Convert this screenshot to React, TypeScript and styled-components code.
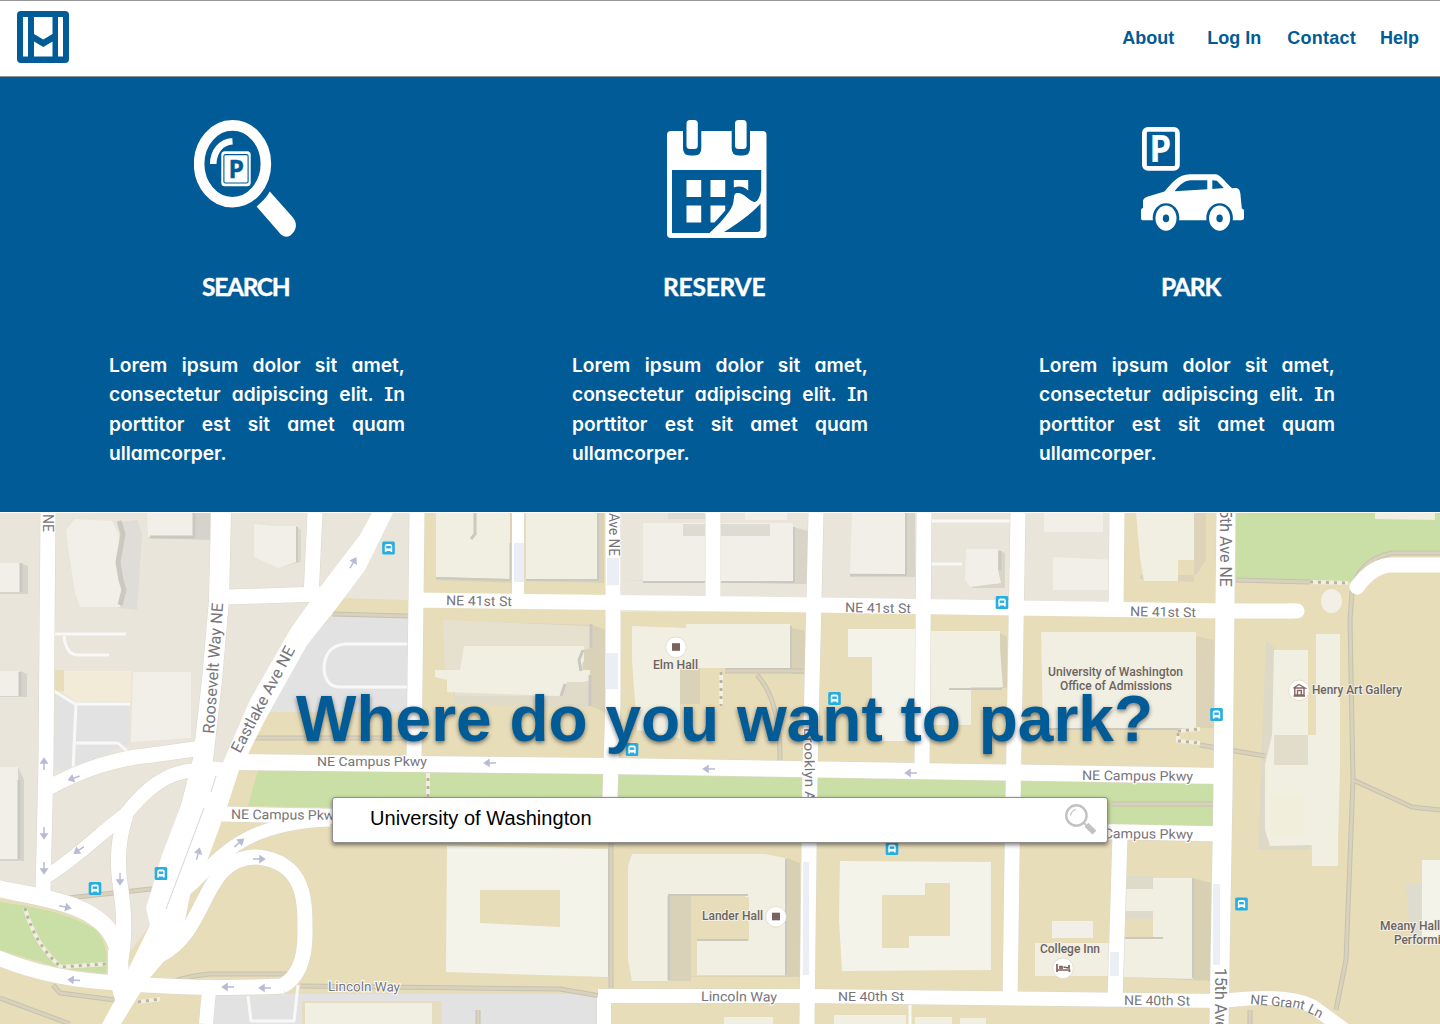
import React from "react";
import styled, { createGlobalStyle } from "styled-components";

const BLUE = "#015b96";

const GlobalStyle = createGlobalStyle`
  * { box-sizing: border-box; }
  body { margin: 0; background: #fff; font-family: "Helvetica Neue", "Liberation Sans", Arial, sans-serif; }
`;

const Page = styled.div`
  width: 1440px;
  height: 1024px;
  display: flex;
  flex-direction: column;
  overflow: hidden;
`;

const Header = styled.header`
  height: 77px;
  display: flex;
  justify-content: space-between;
  align-items: flex-start;
  padding: 10px 21px 0 17px;
  border-top: 1px solid #979797;
  border-bottom: 1px solid #8a8f93;
  background: #fff;
`;

const Nav = styled.nav`
  display: flex;
  padding-top: 16px;
`;

const NavLink = styled.a<{ $gap: number; $track: number }>`
  margin-left: ${(p) => p.$gap}px;
  color: ${BLUE};
  font-size: 18px;
  font-weight: 700;
  line-height: 22px;
  letter-spacing: ${(p) => p.$track}px;
  white-space: nowrap;
`;

const Features = styled.section`
  height: 436px;
  display: grid;
  grid-template-columns: 296px 296px 296px;
  column-gap: 167px;
  padding: 43px 0 0 109px;
  background: ${BLUE};
  border-bottom: 1px solid #fff;
`;

const Feature = styled.article<{ $shift?: number }>`
  margin-left: ${(p) => p.$shift ?? 0}px;
  width: 296px;
  display: flex;
  flex-direction: column;
`;

const IconSlot = styled.div<{ $left: number }>`
  height: 118px;
  margin-left: ${(p) => p.$left}px;
  svg { display: block; }
`;

const FeatureTitle = styled.h2<{ $left: number; $track: number }>`
  margin: 34px 0 0 ${(p) => p.$left}px;
  color: #fff;
  font-family: Chalkboard, Lato, "Noto Sans", sans-serif;
  font-size: 24.5px;
  font-weight: 700;
  line-height: 30px;
  letter-spacing: ${(p) => p.$track}px;
  white-space: nowrap;
  -webkit-text-stroke: 0.4px #fff;
`;

const FeatureText = styled.p`
  margin: 49px 0 0;
  color: #fff;
  font-family: Chalkboard, Inter, "Noto Sans", sans-serif;
  font-feature-settings: "cv11", "cv08";
  font-size: 19.2px;
  font-weight: 600;
  line-height: 29.3px;
  letter-spacing: 0;
  text-align: justify;
`;

const Hero = styled.section`
  height: 511px;
  display: grid;
  grid-template: 511px / 1440px;
`;

const MapSvg = styled.svg`
  grid-area: 1 / 1;
  display: block;
  font-family: Roboto, sans-serif;
`;

const HeroContent = styled.div`
  grid-area: 1 / 1;
  z-index: 1;
  display: flex;
  flex-direction: column;
  align-items: center;
  padding-top: 168px;
`;

const HeroTitle = styled.h1`
  margin: 0;
  padding-left: 9px;
  color: ${BLUE};
  font-size: 64px;
  font-weight: 700;
  line-height: 76px;
  white-space: nowrap;
  text-shadow: 0 2px 4px rgba(0, 0, 0, 0.5);
`;

const SearchBox = styled.div`
  width: 776px;
  height: 46px;
  margin-top: 40px;
  padding: 0 10px 2px 37px;
  display: flex;
  align-items: center;
  justify-content: space-between;
  background: #fff;
  border: 1px solid #8f8f8f;
  border-radius: 3px;
  box-shadow: 0 2px 4px rgba(0, 0, 0, 0.5);
`;

const SearchText = styled.span`
  padding-bottom: 2px;
  color: #000;
  font-size: 20px;
  line-height: 24px;
  letter-spacing: 0.05px;
`;

function Logo() {
  return (
    <svg width="52" height="52" viewBox="17 11 52 52">
      <rect x="17" y="11" width="52" height="52" rx="4" fill={BLUE} />
      <g fill="#fff">
        <rect x="23" y="17" width="5" height="39.5" />
        <rect x="58" y="17" width="5" height="39.5" />
        <path d="M34 17H52.5V34L43.3 39.5L34 34Z" />
        <path d="M34 41.5L43.3 47L52.5 41.5V56.5H34Z" />
      </g>
    </svg>
  );
}

function SearchIcon() {
  return (
    <svg width="103" height="118" viewBox="194 120 103 118">
      <ellipse cx="232.5" cy="163.8" rx="33.4" ry="38.4" fill="none" stroke="#fff" strokeWidth="10.6" />
      <path d="M213.2 164C213.5 151 221 142 232.5 141.2" fill="none" stroke="#fff" strokeWidth="6.6" />
      <path d="M256.6 206.5C262 202 266 198 269.8 191.6L292.5 217C296.5 221.5 297 227 294 231.5C290 237.5 285 238.5 280.5 234Z" fill="#fff" />
      <rect x="221.3" y="151.3" width="29.4" height="35" rx="3.5" fill="#fff" />
      <rect x="223.9" y="154.6" width="24.2" height="28.4" rx="1.5" fill="none" stroke={BLUE} strokeWidth="1.1" />
      <text x="228.4" y="178.3" fontSize="25" fontWeight="700" fontFamily="Open Sans, Noto Sans, sans-serif" fill={BLUE} stroke={BLUE} strokeWidth="0.4" textLength="15.5" lengthAdjust="spacingAndGlyphs">P</text>
    </svg>
  );
}

function CalendarIcon() {
  return (
    <svg width="100" height="118" viewBox="667 120 100 118">
      <rect x="667" y="131" width="99.5" height="107" rx="4" fill="#fff" />
      <path d="M683 130H701.3V148Q701.3 155.5 694.5 155.5H690Q683 155.5 683 148Z" fill={BLUE} />
      <path d="M731.7 130H750V148Q750 155.5 743 155.5H738.5Q731.7 155.5 731.7 148Z" fill={BLUE} />
      <rect x="686.5" y="120" width="11.3" height="29" rx="3.5" fill="#fff" />
      <rect x="735" y="120" width="11.6" height="29" rx="3.5" fill="#fff" />
      <path d="M672 170H761.2V190C760 197 757.5 202.5 754 202C748 200 744 193 738 193C731 193 737 201 729.5 211C724 219 717 226 709.5 233H672Z" fill={BLUE} />
      <path d="M760.6 203.5V228Q760.6 232 757 232H724C737 224 750 215 760.6 203.5Z" fill={BLUE} />
      <g fill="#fff">
        <rect x="686.5" y="180" width="14.7" height="17" />
        <rect x="710.5" y="180" width="14.7" height="17" />
        <rect x="686.5" y="205.5" width="14.7" height="17" />
        <path d="M710.5 205.5H725.2V210.5L714.5 222.5H710.5Z" />
        <path d="M733.8 180H748.2V190.5C744 186 739 185.8 733.8 187.5Z" />
      </g>
    </svg>
  );
}

function ParkIcon() {
  return (
    <svg width="104" height="118" viewBox="1141 120 104 118">
      <rect x="1144.4" y="129.4" width="33" height="39" rx="3.5" fill="none" stroke="#fff" strokeWidth="4.8" />
      <text x="1149.3" y="162.3" fontSize="36.8" fontWeight="700" fontFamily="Open Sans, Noto Sans, sans-serif" fill="#fff" textLength="22" lengthAdjust="spacingAndGlyphs">P</text>
      <path fillRule="evenodd" fill="#fff" d="M1142.5 220.3Q1141 220.3 1141 218.5V210Q1141 208.5 1143 208V200.5Q1144 197.5 1148 196.5L1164.5 191.5C1172 183 1178 174.3 1190 174.3H1215.5C1220 174.3 1224 181 1232 188.3C1238 187.2 1239.5 189 1240.3 193L1241.8 208.5Q1244 209 1244 210.5V218Q1244 220.3 1241.5 220.3ZM1174.6 191.2L1207.3 189.2V180.2H1191C1185 180.2 1179 185 1174.6 191.2ZM1212.3 180.2V189L1223.8 188L1216.8 180.8Z" />
      {[1166, 1219.6].map((x) => (
        <g key={x}>
          <ellipse cx={x} cy="218" rx="13.3" ry="14.8" fill={BLUE} />
          <ellipse cx={x} cy="218.2" rx="10.5" ry="12.6" fill="#fff" />
          <ellipse cx={x} cy="218.4" rx="3.2" ry="3.8" fill={BLUE} />
        </g>
      ))}
    </svg>
  );
}

function Magnifier() {
  return (
    <svg width="32" height="32" viewBox="1065 803 32 32">
      <circle cx="1076.4" cy="815.5" r="10.2" fill="none" stroke="#c2c2c2" strokeWidth="2.4" />
      <path d="M1070.5 815.5Q1071.5 810.5 1076 809.5" fill="none" stroke="#c2c2c2" strokeWidth="1.2" />
      <path d="M1083.5 822.5L1086 825" stroke="#c2c2c2" strokeWidth="2" />
      <path d="M1086.4 824.8L1094.4 832.6" stroke="#c2c2c2" strokeWidth="5.4" />
    </svg>
  );
}

type Shape = [string, string];

const LAND = "#e8ddb9";
const HOME = "#e9e5db";
const LOT = "#e2e2e2";
const PARK = "#cadfa6";
const BLD = "#f1eee2";
const PALE = "#f4f3ea";
const PINK = "#f2efe8";
const SHADE = "#d9d2b8";
const GREY = "#d5d3cc";

const areas: Shape[] = [
  [HOME, "M0 513H414V617H324L240 760L150 925L124 960L115 925L60 900L0 882Z"],
  [HOME, "M613 513H1118V612H613Z"],
  [LAND, "M340 598L410 600V613L333 612Z"],
  [LOT, "M332 616L409 617V712H262L280 672L310 640Z"],
  [LOT, "M55 692L75 704H130L130 743L75 770H54Z"],
  [LAND, "M55 670H64V691H55Z"],
  ["#f1ebd8", "M64 671H131V701L76 702L64 693Z"],
  [PARK, "M1236 513H1440V556H1392Q1370 558 1352 582L1236 579Z"],
  [PARK, "M258 769L1214 784V826L248 806Z"],
  [PARK, "M0 902L26 906Q72 914 96 930Q110 945 106 974L60 968L0 950Z"],
  [LOT, "M214 994H598V1024H214Z"],
  [LAND, "M438 960H598V990L438 984Z"],
  ["#e6ddc0", "M302 1001H442V1024H302Z"],
];

const shadows: Shape[] = [
  ["#deddd7", "M120 522L137 520L142 534L137 610L118 608Z"],
  [GREY, "M195 513H210V540L148 538Z"],
  [GREY, "M21 564L28 566V594H0V591H21Z"],
  ["#dbd7cc", "M296 526L301 530V562L280 567L270 563Z"],
  [GREY, "M20 671L27 674V697H0V695H20Z"],
  [GREY, "M18 767L24 780V861H0V858H18Z"],
  [SHADE, "M510 513H515V583L436 580V577Z"],
  [SHADE, "M597 513H604V583L526 581V578Z"],
  ["#d8d4c8", "M793 527L808 531V584H792L622 580H792Z"],
  ["#d8d4c8", "M906 513H915V577H850V574H906Z"],
  ["#d8d4c8", "M998 550L1005 553V588H972V584H998Z"],
  [SHADE, "M446 621L593 625L605 630V712L590 706L455 700Z"],
  ["#d9d1b6", "M792 628L806 631V674H792Z"],
  ["#d9d1b6", "M1000 633L1007 637V688H1001Z"],
  ["#ddd3b8", "M1196 636L1214 640V728H1196Z"],
  ["#ddd3b8", "M1194 513H1206V560L1196 575H1140V579L1194 582Z"],
  ["#d8d0b2", "M787 858L800 863V977H771L632 976H785Z"],
  ["#d8d0b2", "M1193 878L1211 883V981L1122 977H1193Z"],
  ["#ded8c6", "M1266 640L1275 648V760L1268 840H1310V850H1258Z"],
  ["#dedccf", "M1406 884H1423V935L1410 940Z"],
];

const buildings: Shape[] = [
  [PINK, "M75 519L112 521L118 533L120 546L116 562L122 588L120 607H80L75 592L70 560L66 530Z"],
  [PINK, "M147 513H193V537H148Z"],
  [PINK, "M254 524L273 526H296V562L278 568L254 557Z"],
  [PINK, "M0 563H20V592H0Z"],
  [PINK, "M0 671H19V696H0Z"],
  [PINK, "M133 672H191V738L131 742Z"],
  [PINK, "M0 767H18V859H0Z"],
  [BLD, "M436 513H510V579L436 577Z"],
  [BLD, "M526 513H597V580H526Z"],
  ["#e6e0cf", "M443 620L591 626V648L583 650V703L455 700V690L445 670Z"],
  [BLD, "M464 646H584V661L578 670H590V681L565 684L561 696L447 692V680L435 677V670H460Z"],
  ["#e0dbc9", "M567 682H590V707L454 704V696H560Z"],
  [PINK, "M643 523H793V581H643Z"],
  ["#dedbd2", "M668 513H706V519H668ZM683 524H770V536H683Z"],
  [BLD, "M632 626L686 628V624H790V668H680V738L637 730L632 660Z"],
  [SHADE, "M680 668H700V704H680Z"],
  [PINK, "M745 513H787V520H745Z"],
  [PINK, "M852 513H905V574L850 573Z"],
  [PINK, "M966 549H998V570L1001 583L970 587L965 580Z"],
  [PINK, "M1044 513H1103V532H1044ZM1053 557L1118 560V590H1053Z"],
  [PALE, "M848 629H916V741H872V657H848Z"],
  [BLD, "M930 631H1000V650L1003 687H971V725H930Z"],
  [BLD, "M1041 632H1196V729H1043Z"],
  [BLD, "M1136 513H1194V560H1178V581H1144L1140 558Z"],
  [BLD, "M1375 513H1435V520L1375 519Z"],
  [BLD, "M1274 650H1308V735H1272Z"],
  [BLD, "M1316 634H1340V770L1338 840V866H1312V845L1270 846L1265 830V765L1272 735H1316Z"],
  ["#e2dccb", "M1274 735H1308V765H1274Z"],
  ["#f2eedc", "M1270 794H1305V838H1270Z"],
  [PALE, "M447 846L608 849V977L446 972Z"],
  [BLD, "M632 854H765L785 858L787 975H697V940H745V895H668V981H632L628 960V866Z"],
  [SHADE, "M668 895H691V981H668Z"],
  [PALE, "M840 861L991 862V970L842 971L839 920Z"],
  [PINK, "M1052 921H1093V938H1052Z"],
  [BLD, "M1035 943H1122V976H1035Z"],
  [BLD, "M1122 878H1193V979L1122 977Z"],
  ["#dfdbca", "M1122 876H1153V889H1122ZM1122 911H1153V919H1122Z"],
  [PALE, "M1422 860H1440V940H1422Z"],
  [BLD, "M305 1003H432V1024H305Z"],
  [BLD, "M724 1017H773V1024H724ZM834 1015H906V1024H834ZM915 1017H952V1024H915ZM960 1018H986V1024H960Z"],
];

const courts: Shape[] = [
  [LAND, "M480 890H560V927L480 923Z"],
  [LAND, "M691 897H749V940H691Z"],
  [LAND, "M882 895H925V883H950V936H909V948H882Z"],
  [LAND, "M1125 919H1153V939H1125Z"],
];

const edges: [number, string][] = [
  [5, "M119 521L123 534L118 562L121 580L124 590L120 605"],
  [3, "M194 513V537L150 537"],
  [3, "M21 563V592M20 672V696M19 780V859"],
  [2, "M297 527V562"],
  [3, "M475 513V534L471 539"],
  [3, "M511 543V580"],
  [2, "M598 513V580H526"],
  [2, "M436 578L510 580"],
  [2, "M794 527V582H643"],
  [2, "M906 513V575H850"],
  [3, "M1000 551V570"],
  [3, "M591 624V648M583 650L579 660L581 671M590 675V706M565 684L561 696"],
  [2, "M791 626V669H726"],
  [3, "M669 896V980"],
  [2, "M786 859V975M668 895H748M697 940H748"],
  [2, "M609 849V975"],
  [2, "M1122 938H1163M1193 878V978"],
  [2, "M1043 729H1196"],
  [2, "M949 689H1002"],
];

const roads: [number, string][] = [
  [15, "M48 513L46 760L43 892"],
  [20, "M221 513L219 600L212 680L203 760L190 810"],
  [15, "M228 597L320 594"],
  [15, "M315 513L311 598"],
  [15, "M417 513L414 762"],
  [12, "M518 513V598"],
  [15, "M613 513V700L610 798"],
  [15, "M713 513V602"],
  [15, "M816 513L810 770L807 1024"],
  [15, "M924 513L922 768"],
  [15, "M1018 513L1012 860L1010 1005"],
  [15, "M1117 513L1116 608"],
  [15, "M1120 836L1115 1000"],
  [19, "M1226 513L1223 790L1219 1024"],
  [16, "M238 762L610 766L1223 776"],
  [15, "M222 814L1223 834"],
  [15, "M48 788Q98 760 152 755L202 748"],
  [14, "M45 877C75 860 100 833 125 815C145 790 165 772 196 770"],
  [15, "M126 815Q114 850 121 890Q127 930 120 965"],
  [17, "M-4 888C40 898 92 902 112 935Q124 955 118 990"],
  [15, "M-4 957Q50 980 120 983Q200 990 284 986"],
  [15, "M160 955C210 930 200 857 257 857C305 862 305 900 305 930Q306 974 282 986"],
  [13, "M178 896L192 884C222 855 245 823 330 820"],
  [14, "M209 990L206 1024"],
  [14, "M598 996H808L1222 1001Q1285 993 1312 1006L1345 1030"],
  [14, "M604 997V1024"],
];

const lanes = [
  "M55 634H126", "M64 636Q66 655 78 655H109", "M54 691L75 704H130", "M76 704L73 770", "M76 743H118L128 752",
  "M409 644H345Q324 646 324 670Q326 687 340 687H409", "M931 521H1011", "M931 564H962", "M248 996L251 1021H294L298 985",
  "M910 1005V1024",
];

const paths = [
  "M1236 580L1310 582", "M1440 553H1392Q1358 560 1352 592L1350 620L1353 780Q1350 860 1346 960L1336 1010",
  "M1353 780L1412 807L1440 810", "M1200 745L1265 756", "M1112 804H1214", "M300 986L560 989L600 996", "M611 843V988",
  "M725 671H806", "M757 675Q781 700 780 765", "M245 738L410 738", "M332 614L409 616",
  "M53 985L60 993L115 1000M0 998L70 1024", "M155 990Q180 976 210 974H296", "M68 898L160 888", "M478 1024V1010",
  "M1250 1010V1024",
];

const dots = ["M721 672V706", "M428 770V797", "M1310 582L1348 583", "M1178 731L1200 729M1178 733V741L1200 743", "M25 908Q35 945 61 967L106 964", "M138 1002L160 999"];

const buses: [number, number][] = [
  [388.5, 548], [1002, 602.5], [834.5, 698.5], [632, 749.5], [1216.5, 714.5], [161, 873.5], [95, 888.5], [892, 848.5], [1241.5, 904],
];

const arrows: [number, number, number][] = [
  [353, 563, -60], [44, 764, -90], [44, 833, 90], [44, 868, 90], [74, 778, 160], [79, 850, 145], [120, 879, 90], [65, 907, 12],
  [198, 854, -75], [239, 843, -40], [259, 859, 0], [74, 980, 185], [228, 987, 180], [265, 988, 180], [490, 763, 180],
  [709, 769, 180], [911, 773, 180],
];

interface Label { t: string; x: number; y: number; w: number; r?: number; s?: number; poi?: boolean }

const labels: Label[] = [
  { t: "NE", x: 43, y: 514, w: 18, r: 90, s: 15 },
  { t: "Roosevelt Way NE", x: 214, y: 734, w: 131, r: -86, s: 16 },
  { t: "Eastlake Ave NE", x: 240, y: 754, w: 118, r: -62, s: 16 },
  { t: "Ave NE", x: 609, y: 513, w: 43, r: 90, s: 14.5 },
  { t: "NE 41st St", x: 446, y: 605, w: 66, r: 1 },
  { t: "NE 41st St", x: 845, y: 612, w: 66, r: 1 },
  { t: "NE 41st St", x: 1130, y: 616, w: 66, r: 1 },
  { t: "5th Ave NE", x: 1220, y: 509, w: 78, r: 90, s: 16 },
  { t: "NE Campus Pkwy", x: 317, y: 766, w: 110 },
  { t: "NE Campus Pkwy", x: 1082, y: 780, w: 111, r: 0.5 },
  { t: "NE Campus Pkwy", x: 231, y: 819, w: 110, r: 0.5 },
  { t: "NE Campus Pkwy", x: 1082, y: 838, w: 111, r: 0.5 },
  { t: "Brooklyn Ave", x: 804, y: 728, w: 88, r: 89, s: 13.5 },
  { t: "Lincoln Way", x: 328, y: 991, w: 72, r: 0.5 },
  { t: "Lincoln Way", x: 701, y: 1001, w: 76, r: 0.5 },
  { t: "NE 40th St", x: 838, y: 1001, w: 66 },
  { t: "NE 40th St", x: 1124, y: 1005, w: 66, r: 0.5 },
  { t: "15th Ave NE", x: 1215, y: 968, w: 86, r: 90, s: 16 },
  { t: "Elm Hall", x: 653, y: 669, w: 45, s: 12, poi: true },
  { t: "University of Washington", x: 1048, y: 676, w: 135, s: 12, poi: true },
  { t: "Office of Admissions", x: 1060, y: 690, w: 112, s: 12, poi: true },
  { t: "Henry Art Gallery", x: 1312, y: 694, w: 90, s: 12, poi: true },
  { t: "Lander Hall", x: 702, y: 920, w: 61, s: 12, poi: true },
  { t: "College Inn", x: 1040, y: 953, w: 60, s: 12, poi: true },
  { t: "Meany Hall", x: 1380, y: 930, w: 60, s: 12, poi: true },
  { t: "Performing", x: 1394, y: 944, w: 60, s: 12, poi: true },
];

const Fills = ({ items }: { items: Shape[] }) => (
  <g>{items.map(([fill, d], i) => <path key={i} fill={fill} d={d} />)}</g>
);

function CityMap() {
  return (
    <MapSvg width="1440" height="511" viewBox="0 513 1440 511">
      <rect y="513" width="1440" height="511" fill={LAND} />
      <Fills items={areas} />
      <Fills items={shadows} />
      <Fills items={buildings} />
      <Fills items={courts} />
      <g fill="none" stroke="#cbc8c0" strokeLinejoin="round">
        {edges.map(([w, d]) => <path key={d} d={d} strokeWidth={w} />)}
      </g>
      <g fill="none" strokeLinejoin="round">
        {paths.map((d) => <path key={d} d={d} stroke="#c7c1b0" strokeWidth="5" />)}
        {paths.map((d) => <path key={d} d={d} stroke="#d8d1bb" strokeWidth="3" />)}
        {dots.map((d) => <path key={d} d={d} stroke="#f3eedf" strokeWidth="4" />)}
        {dots.map((d) => <path key={d} d={d} stroke="#b9b3a3" strokeWidth="3" strokeDasharray="3 5" />)}
        {lanes.map((d) => <path key={d} d={d} stroke="#f8f8f6" strokeWidth="3" />)}
        {roads.map(([w, d]) => <path key={d} d={d} stroke="#dcd7c9" strokeWidth={w + 1} />)}
      </g>
      <g fill="#fff" stroke="#fff" strokeLinejoin="round">
        <path stroke="none" d="M372 513L360 535L318 590L290 630L250 700L222 765L241 768L265 720L307 645L335 610L365 570L393 513Z" />
        <path stroke="none" d="M193 760L183 800L162 855L146 908L150 925L128 970L124 940L108 950V975L115 1000L102 1024H121L148 980L165 960L184 925L190 895L207 861L227 807L241 764Z" />
        {roads.map(([w, d]) => <path key={d} d={d} fill="none" strokeWidth={w} />)}
        <path d="M1290 611H1297" fill="none" strokeWidth="15" strokeLinecap="round" />
        <path d="M412 600L815 605L1225 611H1292" fill="none" strokeWidth="15" />
        <path d="M1357 587Q1373 565 1392 565H1440" fill="none" strokeWidth="15" strokeLinecap="round" />
      </g>
      <ellipse cx="1331.5" cy="601" rx="10.5" ry="12" fill="#f2efe6" />
      <path d="M204 808L186 856L166 909M216 776L211 792" fill="none" stroke="#d8d5ce" strokeWidth="1" />
      <g fill="#eceef6">
        <path d="M514 543H524V582H514ZM607 558H619V585H607ZM606 653H618V689H606ZM803 862H809V975H803ZM1213 884H1220V965H1213ZM1110 952H1119V976H1110Z" />
      </g>
      {arrows.map(([x, y, r]) => (
        <path key={`${x}-${y}`} transform={`translate(${x} ${y}) rotate(${r})`} d="M-6 0H4M1 -3L5.5 0L1 3Z" fill="#b9bbd4" stroke="#b9bbd4" strokeWidth="1.5" />
      ))}
      {buses.map(([x, y]) => (
        <g key={x} transform={`translate(${x} ${y})`}>
          <rect x="-6.3" y="-6.5" width="12.6" height="13" rx="1.5" fill="#26aee0" />
          <path d="M-3.7 4V-2Q-3.7 -4 -1.7 -4H1.7Q3.7 -4 3.7 -2V4H2V3H-2V4Z" fill="#fff" />
          <rect x="-2.3" y="-2" width="4.6" height="2.4" fill="#26aee0" />
        </g>
      ))}
      {labels.map((l) => (
        <text
          key={`${l.t}-${l.x}-${l.y}`}
          transform={`translate(${l.x} ${l.y}) rotate(${l.r ?? 0})`}
          fontSize={l.s ?? 13.5}
          fontWeight={l.poi ? 500 : 400}
          fill={l.poi ? "#6b6460" : "#77757a"}
          stroke={l.poi ? "#f3efe2" : "#fff"}
          strokeWidth="2"
          paintOrder="stroke"
          textLength={l.w}
          lengthAdjust="spacingAndGlyphs"
        >
          {l.t}
        </text>
      ))}
      <text transform="translate(1250 1004) rotate(5)" fontSize="13.5" fill="#77757a" textLength="42" lengthAdjust="spacingAndGlyphs">NE Gra</text>
      <text transform="translate(1292 1007) rotate(14)" fontSize="13.5" fill="#77757a">nt</text>
      <text transform="translate(1307 1012) rotate(26)" fontSize="13.5" fill="#77757a">Ln</text>
      {[[676, 647], [776, 916.5], [1299, 690], [1063, 968]].map(([x, y]) => (
        <circle key={x} cx={x} cy={y + 0.3} r="10.3" fill="#fff" stroke="#ddd6c6" strokeWidth="0.7" />
      ))}
      <g fill="#7a625e">
        <rect x="672" y="643.2" width="8" height="7.6" />
        <rect x="772" y="912.7" width="8" height="7.6" />
      </g>
      <path d="M1293.5 688L1299 684.5L1305 688H1293.5M1294.8 688V695H1304V688M1297.5 695V690.5H1301.3V695M1293.5 696H1305" fill="none" stroke="#876862" strokeWidth="1.4" />
      <path d="M1057 964V972M1057 970H1069.5V972M1060 969V966.5H1062V969M1063.5 967L1069 968V965" fill="none" stroke="#80605c" strokeWidth="1.7" />
    </MapSvg>
  );
}

const LOREM = "Lorem ipsum dolor sit amet, consectetur adipiscing elit. In porttitor est sit amet quam ullamcorper.";

export default function App() {
  return (
    <>
      <GlobalStyle />
      <Page>
        <Header>
          <Logo />
          <Nav>
            <NavLink $gap={0} $track={0}>About</NavLink>
            <NavLink $gap={33} $track={0}>Log In</NavLink>
            <NavLink $gap={26} $track={0.25}>Contact</NavLink>
            <NavLink $gap={24} $track={0}>Help</NavLink>
          </Nav>
        </Header>
        <Features>
          <Feature>
            <IconSlot $left={85}><SearchIcon /></IconSlot>
            <FeatureTitle $left={93} $track={-1.3}>SEARCH</FeatureTitle>
            <FeatureText>{LOREM}</FeatureText>
          </Feature>
          <Feature>
            <IconSlot $left={95}><CalendarIcon /></IconSlot>
            <FeatureTitle $left={91} $track={-0.2}>RESERVE</FeatureTitle>
            <FeatureText>{LOREM}</FeatureText>
          </Feature>
          <Feature $shift={4}>
            <IconSlot $left={102}><ParkIcon /></IconSlot>
            <FeatureTitle $left={122} $track={-1.1}>PARK</FeatureTitle>
            <FeatureText>{LOREM}</FeatureText>
          </Feature>
        </Features>
        <Hero>
          <CityMap />
          <HeroContent>
            <HeroTitle>Where do you want to park?</HeroTitle>
            <SearchBox>
              <SearchText>University of Washington</SearchText>
              <Magnifier />
            </SearchBox>
          </HeroContent>
        </Hero>
      </Page>
    </>
  );
}
